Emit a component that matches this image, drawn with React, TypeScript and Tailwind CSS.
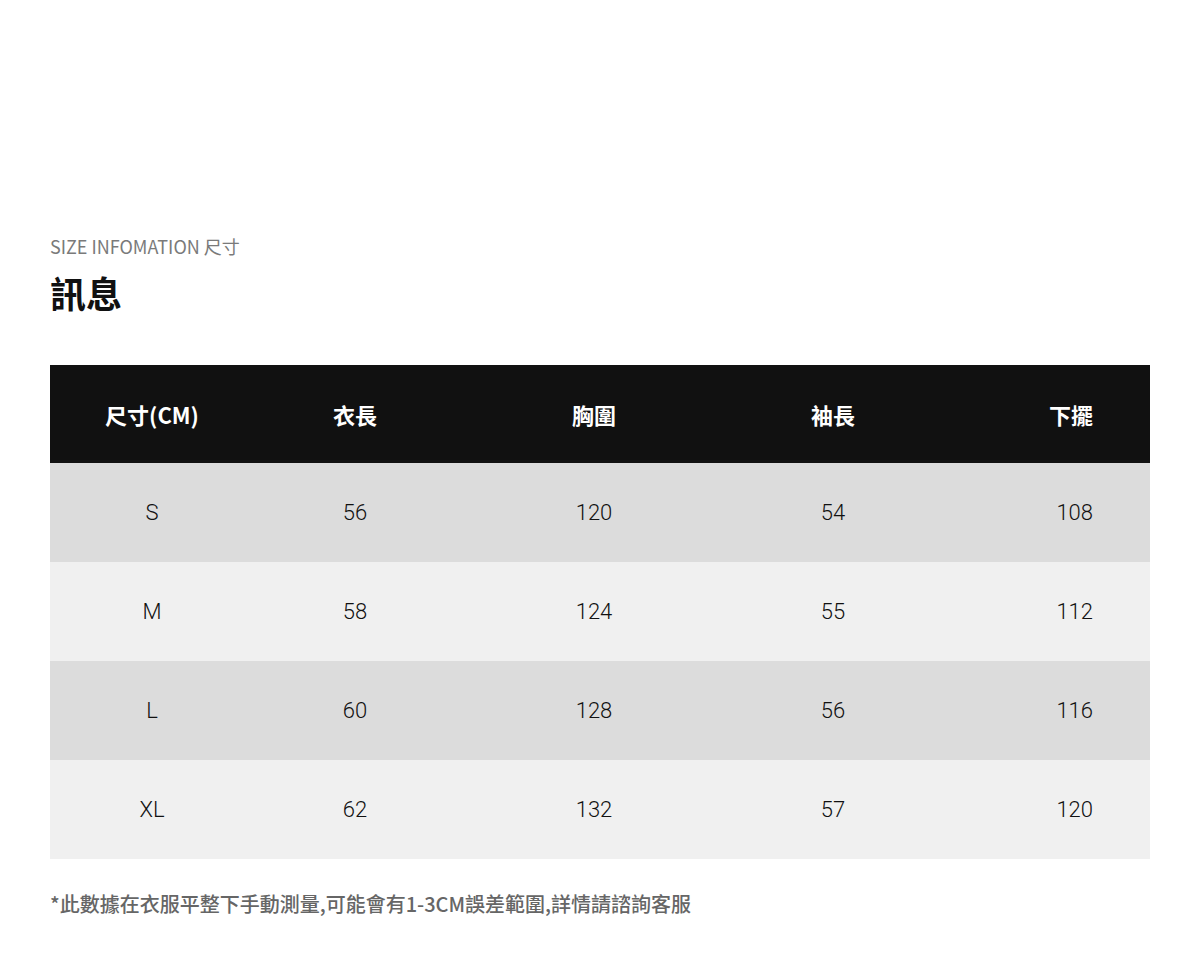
const rows = [
  ["S", "56", "120", "54", "108"],
  ["M", "58", "124", "55", "112"],
  ["L", "60", "128", "56", "116"],
  ["XL", "62", "132", "57", "120"],
];

const headers = ["尺寸(CM)", "衣長", "胸圍", "袖長", "下擺"];

const cjk = "font-['Noto_Sans_CJK_TC','Noto_Sans',sans-serif]";

export default function App() {
  return (
    <div className={`min-h-screen w-[1200px] bg-white px-[50px] pt-[234px] ${cjk}`}>
      <div className="text-[18px] leading-[24px] text-[#7a7a7a]">SIZE INFOMATION 尺寸</div>
      <div className="mt-[12px] text-[36px] font-bold leading-[44px] text-[#111]">訊息</div>

      <div className="mt-[51px] w-[1100px]">
        <div className="grid h-[98px] grid-cols-[204px_202px_276px_202px_216px] items-center bg-[#111] text-[22px] font-bold text-white">
          {headers.map((h, i) => (
            <div key={h} className={i === 4 ? "pr-[57px] text-right" : "text-center"}>
              {h}
            </div>
          ))}
        </div>
        {rows.map((r, ri) => (
          <div
            key={r[0]}
            className={`grid h-[99px] grid-cols-[204px_202px_276px_202px_216px] items-center font-['Roboto',sans-serif] text-[22px] font-light text-[#111] ${
              ri % 2 === 0 ? "bg-[#dcdcdc]" : "bg-[#f0f0f0]"
            }`}
          >
            {r.map((c, i) => (
              <div key={i} className={i === 4 ? "pr-[57px] text-right" : "text-center"}>
                {c}
              </div>
            ))}
          </div>
        ))}
      </div>

      <div className="mt-[31px] text-[20px] font-medium leading-[28px] text-[#666]">
        *此數據在衣服平整下手動測量,可能會有1-3CM誤差範圍,詳情請諮詢客服
      </div>
    </div>
  );
}
